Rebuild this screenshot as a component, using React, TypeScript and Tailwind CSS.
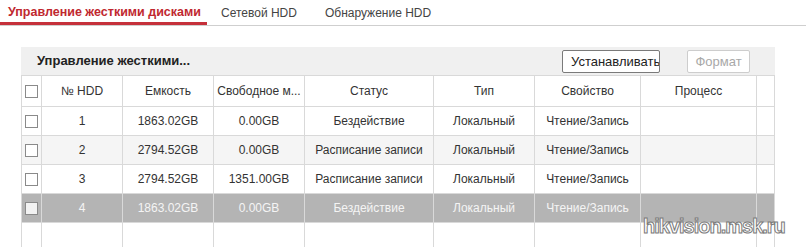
import React from 'react';

type Disk = {
  no: number;
  capacity: string;
  free: string;
  status: string;
  type: string;
  prop: string;
};

const disks: Disk[] = [
  { no: 1, capacity: '1863.02GB', free: '0.00GB', status: 'Бездействие', type: 'Локальный', prop: 'Чтение/Запись' },
  { no: 2, capacity: '2794.52GB', free: '0.00GB', status: 'Расписание записи', type: 'Локальный', prop: 'Чтение/Запись' },
  { no: 3, capacity: '2794.52GB', free: '1351.00GB', status: 'Расписание записи', type: 'Локальный', prop: 'Чтение/Запись' },
  { no: 4, capacity: '1863.02GB', free: '0.00GB', status: 'Бездействие', type: 'Локальный', prop: 'Чтение/Запись' },
];

const cols = 'grid grid-cols-[20px_81px_91px_91px_129px_101px_106px_116px_18px]';
const cell = 'flex items-center justify-center border-r border-[#d9d9d9] whitespace-nowrap overflow-hidden';

const Checkbox = ({ dim }: { dim?: boolean }) => (
  <span className={`block w-[13px] h-[13px] border border-[#8a8a8a] ${dim ? 'bg-[#f2f2f2]' : 'bg-white'}`} />
);

const Row = ({ values, className, dim }: { values: string[]; className: string; dim?: boolean }) => (
  <div className={`${cols} h-[29px] border-b border-[#d9d9d9] ${className}`}>
    <div className={`${cell} pl-[3px] justify-start`}>
      <Checkbox dim={dim} />
    </div>
    {values.map((v, i) => (
      <div key={i} className={cell}>
        {v}
      </div>
    ))}
    <div className={cell} />
  </div>
);

export default function App() {
  const rowBg = ['bg-white', 'bg-[#f5f5f5]', 'bg-white', 'bg-[#b4b4b4] text-[#f4f4f4]'];

  return (
    <div className="relative w-[806px] h-[247px] overflow-hidden bg-white font-['Liberation_Sans',Arial,sans-serif] text-[12px] text-[#333]">
      {/* tabs */}
      <div className="flex h-[26px] border-b border-[#cfcfcf]">
        <div className="w-[207px] pl-[8px] pt-[4px] border-b-[3px] border-[#c5303a] text-[#c0282f] font-bold text-[12.5px] leading-[16px]">
          Управление жесткими дисками
        </div>
        <div className="px-[14px] pt-[5px] leading-[16px] text-[#444]">Сетевой HDD</div>
        <div className="px-[14px] pt-[5px] leading-[16px] text-[#444]">Обнаружение HDD</div>
      </div>

      <div className="pl-[21px] pt-[21px] w-[775px]">
        {/* panel header */}
        <div className="flex items-center h-[28px] bg-[#f0f0f0]">
          <div className="pl-[16px] font-bold text-[13px] text-[#222]">Управление жесткими...</div>
          <div className="ml-auto flex items-center gap-[27px] pr-[25px] pt-[1px]">
            <button className="w-[98px] h-[23px] pl-[8px] text-left overflow-hidden whitespace-nowrap border border-[#7a7a7a] rounded-[2px] bg-white text-[13px] text-[#222]">
              Устанавливать
            </button>
            <button className="w-[63px] h-[23px] border border-[#cdcdcd] rounded-[2px] bg-white text-[13px] text-[#a8a8a8]">
              Формат
            </button>
          </div>
        </div>

        {/* table */}
        <div className="border-l border-t border-[#d9d9d9]">
          <div className={`${cols} h-[31px] border-b border-[#d9d9d9] bg-white`}>
            <div className={`${cell} pl-[3px] justify-start`}>
              <Checkbox />
            </div>
            {['№ HDD', 'Емкость', 'Свободное м...', 'Статус', 'Тип', 'Свойство', 'Процесс'].map((h) => (
              <div key={h} className={cell}>
                {h}
              </div>
            ))}
            <div className={cell} />
          </div>

          {disks.map((d, i) => (
            <Row
              key={d.no}
              values={[String(d.no), d.capacity, d.free, d.status, d.type, d.prop, '']}
              className={rowBg[i]}
              dim={i === 3}
            />
          ))}

          <div className={`${cols} h-[40px]`}>
            {Array.from({ length: 9 }).map((_, i) => (
              <div key={i} className="border-r border-[#d9d9d9]" />
            ))}
          </div>
        </div>
      </div>

      {/* watermark */}
      <div className="absolute left-[643px] top-[214px] font-['Liberation_Sans',Arial,sans-serif] font-bold text-[20px] leading-[24px] tracking-[-1px] text-white [-webkit-text-stroke:1px_#7a7a7a]">
        hikvision.msk.ru
      </div>
    </div>
  );
}
